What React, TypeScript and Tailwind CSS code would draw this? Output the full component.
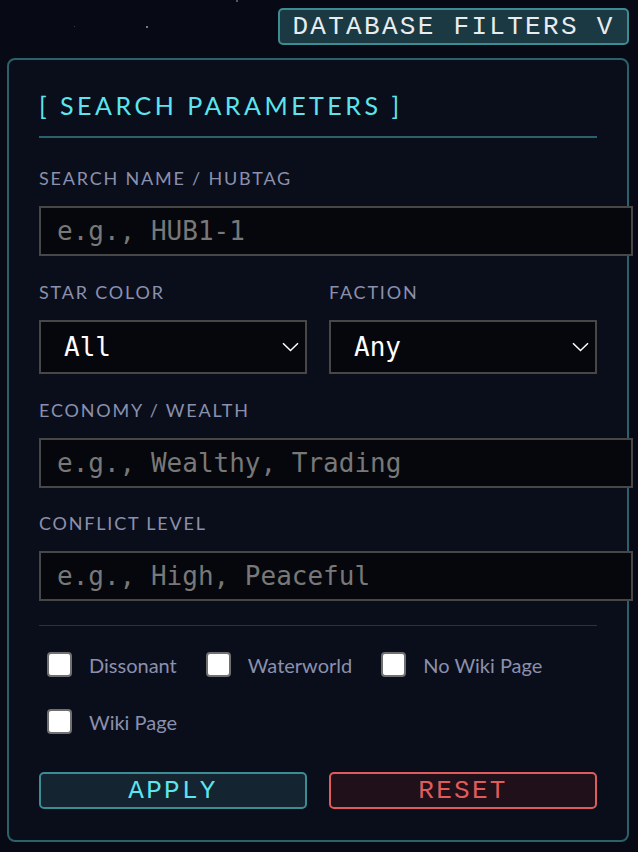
import { useState } from "react";

const labelCls =
  "mb-[18px] block font-['Lato',sans-serif] text-[18px] leading-[20px] tracking-[0.1em] text-[#8b90ae] uppercase";

const inputCls =
  "box-content block h-[46px] w-full border-2 border-[#474747] bg-[#05070c] px-4 font-['DejaVu_Sans_Mono',monospace] text-[26px] text-white outline-none placeholder:text-[#787878]";

function Chevron() {
  return (
    <svg
      className="pointer-events-none absolute right-[8px] top-1/2 -translate-y-1/2"
      width="17"
      height="10"
      viewBox="0 0 17 10"
      fill="none"
    >
      <path d="M1 1.2l7.5 7.3L16 1.2" stroke="#ffffff" strokeWidth="1.5" />
    </svg>
  );
}

function Select({ options }: { options: string[] }) {
  return (
    <div className="relative">
      <select className="block h-[54px] w-full appearance-none border-2 border-[#474747] bg-[#05070c] pl-[23px] font-['DejaVu_Sans_Mono',monospace] text-[26px] text-white outline-none">
        {options.map((o) => (
          <option key={o}>{o}</option>
        ))}
      </select>
      <Chevron />
    </div>
  );
}

export default function App() {
  const [checks, setChecks] = useState<Record<string, boolean>>({});

  const flags = ["Dissonant", "Waterworld", "No Wiki Page", "Wiki Page"];

  return (
    <div className="relative min-h-[852px] w-[638px] overflow-hidden bg-[#070a14]">
      {/* stars */}
      <span className="absolute left-[146px] top-[26px] h-[2px] w-[2px] rounded-full bg-[#9aa0b0]" />
      <span className="absolute left-[74px] top-[26px] h-[1px] w-[1px] bg-[#3a3f50]" />
      <span className="absolute left-[236px] top-0 h-[2px] w-[2px] bg-[#50566a]" />

      <div className="ml-[7px] flex w-[622px] flex-col items-end pt-[8px]">
        {/* toggle */}
        <button className="h-[37px] w-[351px] rounded-[5px] border-2 border-[#3b8c93] bg-[#1b3942] font-['Liberation_Mono',monospace] text-[26px] leading-none tracking-[2.3px] text-[#e8ecef]">
          DATABASE FILTERS V
        </button>

        {/* panel */}
        <div className="mt-[13px] w-full rounded-[8px] border-2 border-[#2b6169] bg-[#0a0e1a] px-[30px] pb-[31px] pt-[30px]">
          <h2 className="font-['Lato',sans-serif] text-[25px] leading-[30px] tracking-[0.14em] text-[#5ce5ee]">
            [ SEARCH PARAMETERS ]
          </h2>
          <div className="mb-[30px] mt-[16px] h-[2px] bg-[#2b6169]" />

          <label className={labelCls}>Search Name / Hubtag</label>
          <input className={inputCls} placeholder="e.g., HUB1-1" />

          <div className="mt-[26px] grid grid-cols-2 gap-x-[22px]">
            <div>
              <label className={labelCls}>Star Color</label>
              <Select options={["All", "Red", "Yellow", "Blue", "White"]} />
            </div>
            <div>
              <label className={labelCls}>Faction</label>
              <Select options={["Any", "Independent", "Federation"]} />
            </div>
          </div>

          <label className={`${labelCls} mt-[26px]`}>Economy / Wealth</label>
          <input className={inputCls} placeholder="e.g., Wealthy, Trading" />

          <label className={`${labelCls} mt-[25px]`}>Conflict Level</label>
          <input className={inputCls} placeholder="e.g., High, Peaceful" />

          <div className="mb-[26px] mt-[24px] h-px bg-[#1c3a44]" />

          <div className="flex flex-wrap gap-x-[29px] gap-y-[32px] pl-[8px]">
            {flags.map((f) => (
              <label key={f} className="flex h-[25px] items-center gap-[17px]">
                <input
                  type="checkbox"
                  checked={!!checks[f]}
                  onChange={() => setChecks({ ...checks, [f]: !checks[f] })}
                  className="h-[25px] w-[25px] appearance-none rounded-[4px] border-2 border-[#707070] bg-white checked:bg-[#5ce5ee]"
                />
                <span className="font-['Lato',sans-serif] text-[20px] leading-[24px] text-[#8b90ae]">
                  {f}
                </span>
              </label>
            ))}
          </div>

          <div className="mt-[38px] grid grid-cols-2 gap-x-[22px]">
            <button className="h-[37px] rounded-[5px] border-2 border-[#3b8c93] bg-[#142430] font-['Liberation_Mono',monospace] text-[26px] leading-none tracking-[2.3px] text-[#5ce5ee]">
              APPLY
            </button>
            <button className="h-[37px] rounded-[5px] border-2 border-[#e05c5c] bg-[#1f1019] font-['Liberation_Mono',monospace] text-[26px] leading-none tracking-[2.3px] text-[#e05c5c]">
              RESET
            </button>
          </div>
        </div>
      </div>
    </div>
  );
}
